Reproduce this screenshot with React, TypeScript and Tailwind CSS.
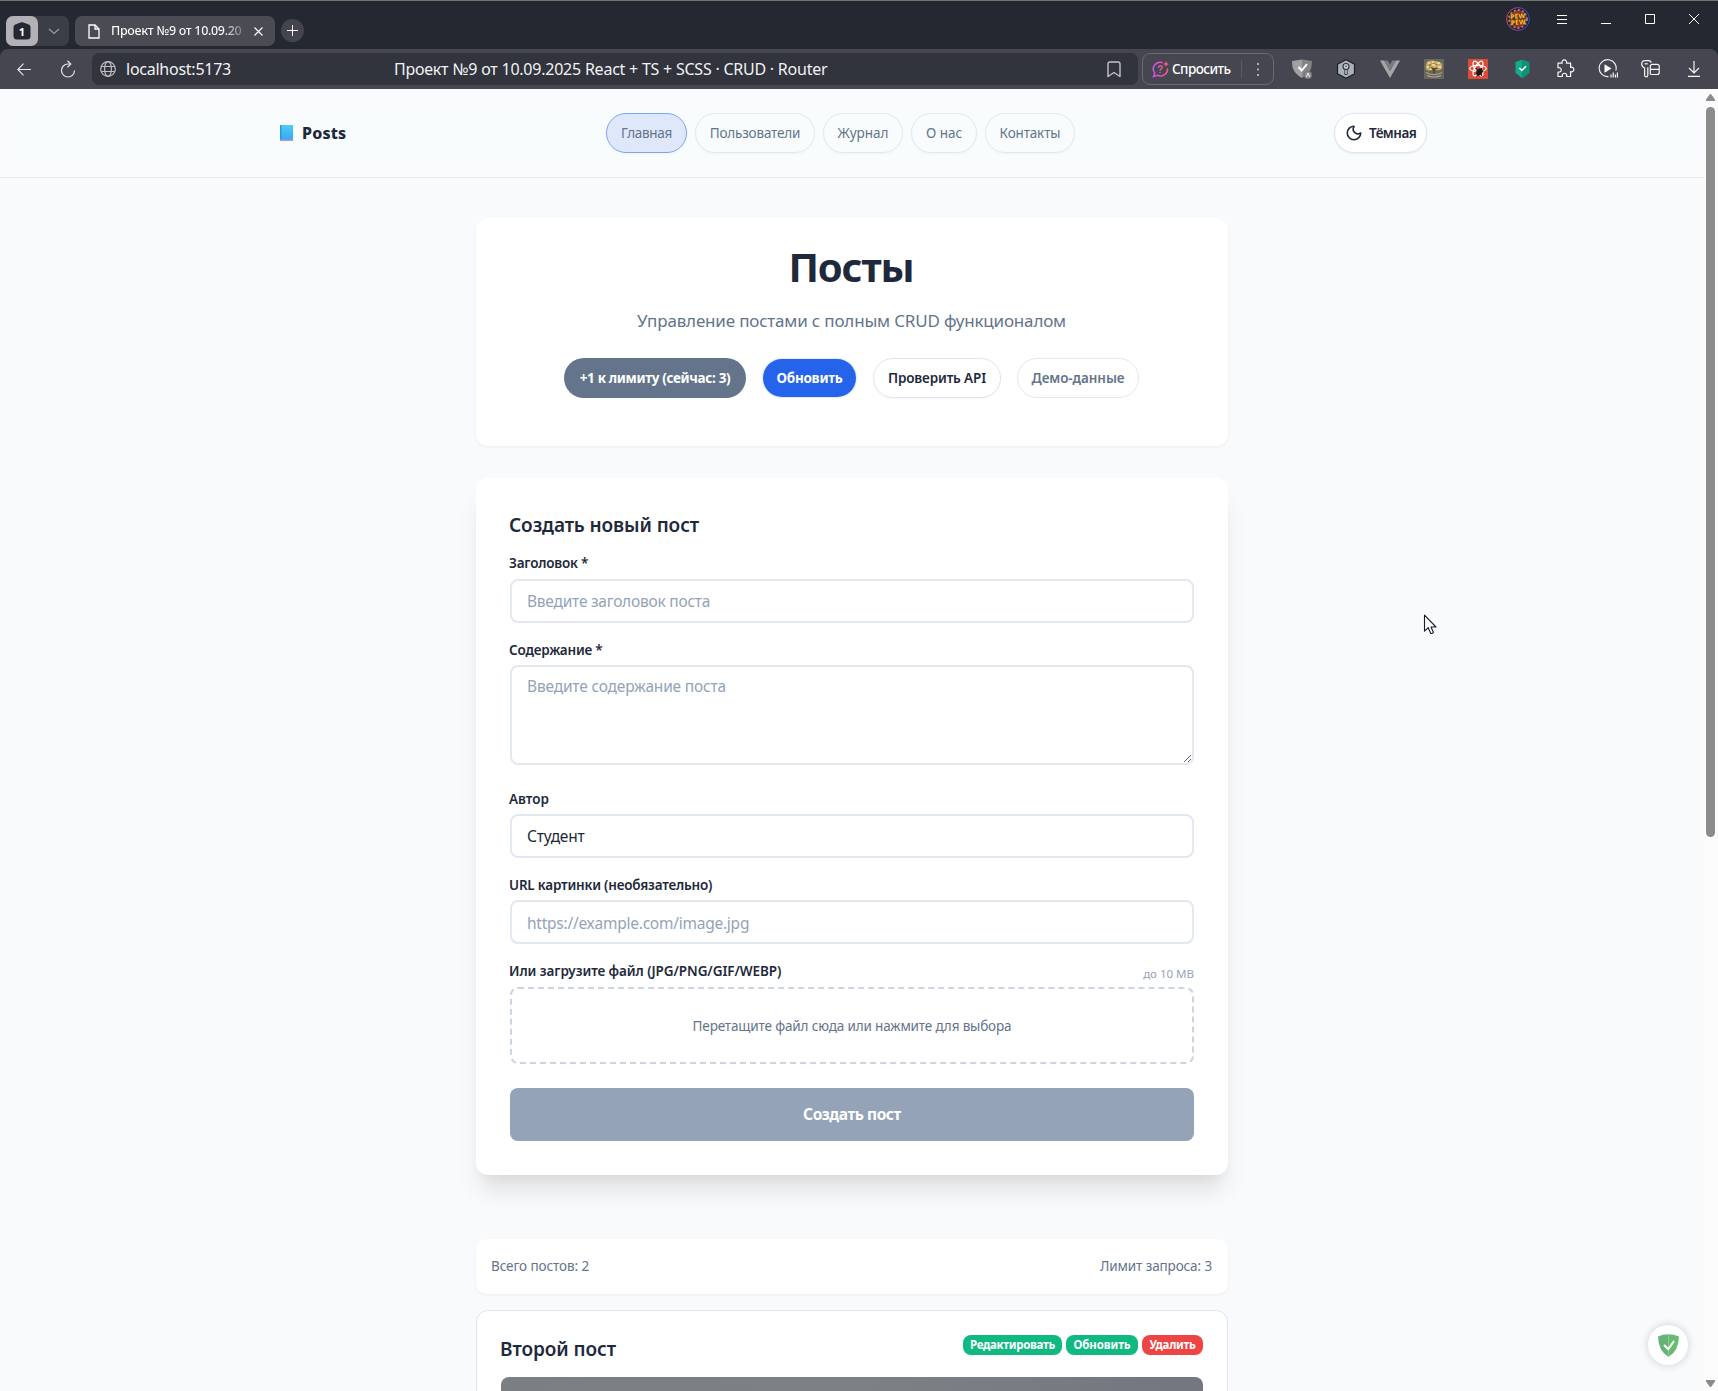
import type { ReactNode } from "react";
import { Moon } from "lucide-react";

function TabStrip() {
  return (
    <div className="flex h-[49px] items-start border-t border-[#74776f] bg-[#242830] text-white">
      <div className="mt-[15px] ml-1.5 flex h-[30px] w-[63px] rounded-[7px] bg-[#3b3e47]">
        <div className="flex h-[30px] w-8 items-center justify-center rounded-[7px] bg-[#b2b2b6]">
          <div className="relative flex h-[18px] w-[18px] items-center justify-center">
            <svg className="absolute inset-0" width="18" height="18" viewBox="0 0 18 18">
              <path d="M2.3 2.5 7.6.5q1.4-.5 2.8 0l5.3 2Q17.5 3.200 17.500 5v9q0 3.500-3.500 3.500H4Q.5 17.500.5 14V5Q.5 3.200 2.300 2.500Z" fill="#242830" />
            </svg>
            <span className="relative text-[11px] leading-none font-bold">1</span>
          </div>
        </div>
        <div className="flex flex-1 items-center justify-center">
          <svg width="12" height="7" viewBox="0 0 12 7" fill="none" stroke="#9a9ba1" strokeWidth="1.2"><path d="m1 1 5 4.500L11 1" /></svg>
        </div>
      </div>
      <div className="mt-[15px] ml-1.5 flex h-[30px] w-[200px] items-center rounded-[7px] bg-[#4b4b54]">
        <svg className="ml-[13px] shrink-0" width="12" height="15" viewBox="0 0 12 15" fill="none" stroke="#fff" strokeWidth="1.300">
          <path d="M1 1h6l4 4v9H1Z" /><path d="M7 1v4h4" />
        </svg>
        <span className="ml-[11px] w-[139px] bg-linear-to-r from-white from-80% to-transparent bg-clip-text text-[12.5px] font-medium tracking-[-0.32px] whitespace-nowrap text-transparent">
          Проект №9 от 10.09.20
        </span>
        <svg className="ml-1 shrink-0" width="9" height="9" viewBox="0 0 9 9" stroke="#fff" strokeWidth="1.100"><path d="m.5.5 8 8m0-8-8 8" /></svg>
      </div>
      <div className="mt-[18px] ml-1.5 flex h-[23px] w-[23px] items-center justify-center rounded-full bg-[#43444d]">
        <svg width="11" height="11" viewBox="0 0 11 11" stroke="#fff" strokeWidth="1"><path d="M5.500 0v11M0 5.500h11" /></svg>
      </div>
      <div className="mt-1 ml-auto flex pr-0.5">
        <WindowButton>
          <svg width="24" height="24" viewBox="0 0 24 24">
            <defs>
              <linearGradient id="ring" x1="0" x2="1"><stop stopColor="#e0436b" /><stop offset="1" stopColor="#4a3fd0" /></linearGradient>
            </defs>
            <circle cx="12" cy="12" r="11.400" fill="#22202f" stroke="url(#ring)" />
            <circle cx="12" cy="12" r="9" fill="#a8281f" />
            <circle cx="12" cy="12" r="9" fill="none" stroke="#6a9a90" strokeWidth="1.800" strokeDasharray="2 2.200" />
            <path d="M4.500 7.500 19 5.500l.5 6-1 5L6 18l-1-5Z" fill="#5c2416" />
            <g fill="#e3b52b" fontFamily="Noto Sans" fontWeight="900" fontSize="6.800" textAnchor="middle">
              <text x="12" y="11.500" transform="rotate(-5 12 12)">PEW</text>
              <text x="12" y="17.500" transform="rotate(-5 12 12)">PEW</text>
            </g>
          </svg>
        </WindowButton>
        <WindowButton><svg width="10" height="9" viewBox="0 0 10 9" stroke="#fff"><path d="M0 .5h10M0 4.500h10M0 8.500h10" /></svg></WindowButton>
        <WindowButton><svg width="10" height="10" viewBox="0 0 10 10" stroke="#fff"><path d="M0 9.500h10" /></svg></WindowButton>
        <WindowButton><svg width="10" height="10" viewBox="0 0 10 10" fill="none" stroke="#fff"><path d="M.5.5h9v9h-9Z" /></svg></WindowButton>
        <WindowButton><svg width="10" height="10" viewBox="0 0 10 10" stroke="#fff"><path d="m0 0 10 10M10 0 0 10" /></svg></WindowButton>
      </div>
    </div>
  );
}

function WindowButton({ children }: { children: ReactNode }) {
  return <div className="flex h-7 w-11 items-center justify-center">{children}</div>;
}

function Slot({ children }: { children: ReactNode }) {
  return <div className="flex h-10 w-11 shrink-0 items-center justify-center">{children}</div>;
}

function Toolbar() {
  return (
    <div className="bg-[#242830]">
      <div className="flex h-10 items-center rounded-t-[8px] bg-[#464650] text-[#f2f2f3]">
        <div className="flex w-[92px] items-center pl-[17px]">
          <svg width="14" height="13" viewBox="0 0 14 13" fill="none" stroke="#e9e9ea" strokeWidth="1.100"><path d="M14 6.500H.8M6.500.7.8 6.500l5.700 5.800" /></svg>
          <svg className="ml-[29px]" width="16" height="18" viewBox="0 0 16 18" fill="none" stroke="#e3e3e5" strokeWidth="1.200">
            <path d="M10.500 4H7.800A6.500 6.500 0 1 0 14.500 10.500" /><path d="m7.500.8 3.300 3.200-3.300 3.200" />
          </svg>
        </div>
        <div className="flex h-8 w-[1046px] items-center rounded-[7px] bg-[#31333d] text-[16px]">
          <svg className="ml-2" width="16" height="16" viewBox="0 0 16 16" fill="none" stroke="#bdbdc2" strokeWidth="1.200">
            <circle cx="8" cy="8" r="7.300" /><ellipse cx="8" cy="8" rx="3.400" ry="7.300" /><path d="M1.500 5.500h13M1.500 10.500h13" />
          </svg>
          <span className="ml-2.5 w-[268px] tracking-[-0.25px]">localhost:5173</span>
          <span className="tracking-[-0.23px]">Проект №9 от 10.09.2025 React + TS + SCSS · CRUD · Router</span>
          <svg className="mr-[17px] ml-auto" width="14" height="17" viewBox="0 0 14 17" fill="none" stroke="#c3c3c7" strokeWidth="1.400" strokeLinejoin="round">
            <path d="M1 15.500V3q0-2 2-2h8q2 0 2 2v12.500l-6-4Z" />
          </svg>
        </div>
        <div className="ml-1 flex h-8 w-[132px] items-center rounded-[8px] border border-[#6a6a73]">
          <svg className="ml-[9px]" width="17" height="17" viewBox="0 0 17 17" fill="none" strokeLinecap="round">
            <defs><linearGradient id="ask" x1="0" x2="1"><stop stopColor="#d152e0" /><stop offset="1" stopColor="#f4568c" /></linearGradient></defs>
            <path d="M10 1.500A7 6.600 0 0 0 2.800 12L1.500 15.500 5.500 14.300A7 6.600 0 0 0 15.500 8" stroke="url(#ask)" strokeWidth="1.500" />
            <path d="M6.500 6.300c.3-2.200 4-1.900 3.700.2-.2 1.300-1.900 1.200-2 2.700M8 11.500v.1" stroke="url(#ask)" strokeWidth="1.400" />
            <path d="M14 0q.3 2.700 3 3-2.700.3-3 3-.3-2.700-3-3 2.700-.3 3-3Z" fill="#f4568c" />
          </svg>
          <span className="ml-[3px] w-[69px] text-[13.5px] font-medium tracking-[-0.55px] text-white">Спросить</span>
          <div className="h-[18px] w-px bg-[#5b5b65]" />
          <svg className="ml-[15px]" width="2" height="13" viewBox="0 0 2 13" fill="#a9a9ae"><path d="M0 0h2v2H0zM0 5.500h2v2H0zM0 11h2v2H0z" /></svg>
        </div>
        <div className="ml-1.5 flex">
          <Slot>
            <svg width="20" height="20" viewBox="0 0 20 20">
              <path d="M0 2 10 .5V19Q2 14.500.5 8Z" fill="#a1a1a2" /><path d="M20 2 10 .5V19q8-4.500 9.500-11Z" fill="#858586" />
              <path d="m6.500 8 3.200 3.500L15 5.200" fill="none" stroke="#fff" strokeWidth="1.900" />
              <circle cx="16" cy="16" r="3.800" fill="#8f8f91" stroke="#747477" /><path d="m14.300 18 1.700-4 1.700 4" fill="none" stroke="#eee" />
            </svg>
          </Slot>
          <Slot>
            <svg width="20" height="20" viewBox="0 0 20 20">
              <path d="m10 .8 8.500 4.500v9.400L10 19.200l-8.500-4.500V5.300Z" fill="#a8b0ba" stroke="#1d2025" strokeWidth="1.200" strokeLinejoin="round" />
              <circle cx="10" cy="7.500" r="3" fill="#c9ced5" stroke="#30343a" strokeWidth="1.100" /><circle cx="10" cy="7.200" r=".8" fill="#30343a" />
              <path d="M8.800 10.500h2.400V15.500H8.800Z" fill="#c9ced5" stroke="#30343a" strokeWidth=".9" />
            </svg>
          </Slot>
          <Slot>
            <svg width="20" height="18" viewBox="0 0 20 18"><path d="M0 .5h4L10 11 16 .5h4L10 18Z" fill="#a6a6a9" /><path d="M4 .5h3.700L10 4.500 12.300.5H16L10 11Z" fill="#7c7c80" /></svg>
          </Slot>
          <Slot>
            <svg width="20" height="20" viewBox="0 0 20 20">
              <path d="M0 0h20v20H0Z" fill="#69675a" />
              <path d="M2 5.500Q2.500 1.500 8 1.500T17.500 4q2 4-.5 6.500-3 1.500-5 .5h-4q-4 1.500-6-.5-1-2.500 0-5Z" fill="#c4a965" />
              <path d="M4 4h2M8 3h2m3 1h3M3 8h2m3-2h3m3 2h3M6 10h2m3-2h1" stroke="#efe2b4" strokeWidth="1.400" />
              <path d="M5 6h2m5-.5h1M9 4.500h1M5.500 8.500h1m6 1h2" stroke="#7b6234" strokeWidth="1" />
              <path d="M10 9v6M7.500 8.500l2.500 3 2.500-3" fill="none" stroke="#574225" strokeWidth="1.300" />
              <path d="M2 13.500q3 2 8 2t8-2M3 16.500q3 1.500 7 1.500t7-1.500" fill="none" stroke="#aaa58e" strokeWidth="1.100" />
            </svg>
          </Slot>
          <Slot>
            <svg width="20" height="20" viewBox="0 0 20 20">
              <path d="M0 0h20v20H0Z" fill="#dc4a38" />
              <g fill="none" stroke="#fff" strokeWidth="1.200"><ellipse cx="10" cy="9.500" rx="8.300" ry="3.200" /><ellipse cx="10" cy="9.500" rx="8.300" ry="3.200" transform="rotate(60 10 9.500)" /><ellipse cx="10" cy="9.500" rx="8.300" ry="3.200" transform="rotate(120 10 9.500)" /></g>
              <ellipse cx="11.500" cy="13" rx="2.800" ry="4" fill="#1b1b1b" transform="rotate(35 11.500 13)" />
              <path d="m8 9 6 8M7.500 13l8-1M9 17l5-8" stroke="#1b1b1b" strokeWidth="1.100" />
            </svg>
          </Slot>
          <Slot>
            <svg width="15" height="20" viewBox="0 0 15 20">
              <path d="M7.500.5.5 3v11L7.500 19.500Z" fill="#14aa8c" /><path d="m7.500.5 7 2.500v11l-7 5.500Z" fill="#0e9279" />
              <path d="m4.300 9 2.500 2.500 4.200-4.300" fill="none" stroke="#fff" strokeWidth="1.500" />
            </svg>
          </Slot>
          <Slot>
            <svg width="20" height="20" viewBox="0 0 20 20" fill="none" stroke="#f5f5f5" strokeWidth="1.200" strokeLinejoin="round">
              <path d="M2 4.200H6.200A2.300 2.300 0 1 1 10.400 4.200H14.600V8.400A2.300 2.300 0 1 1 14.600 12.600V17.500H10.600A2.300 2.300 0 1 0 6.400 17.500H2V13A2.300 2.300 0 1 0 2 8.800Z" />
            </svg>
          </Slot>
          <div className="flex w-10 items-center justify-center">
            <svg width="20" height="20" viewBox="0 0 20 20" fill="none" stroke="#f5f5f5" strokeWidth="1.100">
              <path d="M10.500 17.600a8.500 8.500 0 1 1 7.300-6" /><path d="M6.500 5.200 13.500 9.500l-7 4.300Z" fill="#fff" stroke="none" />
              <path d="M13 18.500v-3M15.200 18.500v-5M17.400 18.500v-3M19.400 18.500v-5" strokeWidth="1.200" />
            </svg>
          </div>
          <Slot>
            <svg width="19" height="18" viewBox="0 0 19 18" fill="none" stroke="#f5f5f5" strokeWidth="1.200" strokeLinejoin="round">
              <path d="M6.800 7.200V15.200Q6.800 16.800 5.200 16.800T3.600 15.200V8Q.7 7 .7 4T4 .7H7.500Q10 .7 10 2.800" />
              <path d="M3.600 3.800H6.800" />
              <path d="M9.300 14.200V6.300Q9.300 4.300 11.200 4.300H16.200Q18.200 4.300 18.200 6.300V12.500Q18.200 14.500 16.200 14.500H9.500M9.300 9.300H18" />
            </svg>
          </Slot>
          <Slot><svg width="12" height="16" viewBox="0 0 12 16" fill="none" stroke="#f5f5f5" strokeWidth="1.200"><path d="M6 0v12M1 7l5 5 5-5M0 15.300h12" /></svg></Slot>
        </div>
      </div>
    </div>
  );
}

function NavPill({ className, children }: { className: string; children: ReactNode }) {
  return <a className={`flex h-10 items-center justify-center rounded-full border shadow-[0_1px_2px_rgba(100,116,139,0.06)] ${className}`}>{children}</a>;
}

function SiteHeader() {
  return (
    <header className="flex h-[89px] border-b border-[#e7eaef] bg-[#f8fcfd] pl-[278px] shadow-[inset_0_0_12px_8px_#fafafd]">
      <div className="flex w-[1149px] items-center justify-between text-[13.5px] text-[#64748b]">
        <div className="flex w-[69px] items-center text-[16px] font-extrabold text-[#1e293b]">
          <svg className="ml-0.5" width="13" height="16" viewBox="0 0 13 16">
            <defs><linearGradient id="book" x2="0" y2="1"><stop stopColor="#4fcdf5" /><stop offset="1" stopColor="#36a4f3" /></linearGradient></defs>
            <path d="M0 0h13v16H0Z" fill="url(#book)" /><path d="M0 0h1.500v16H0Z" fill="#3196d2" /><path d="M0 14.500h13V16H0Z" fill="#a899e6" />
          </svg>
          <span className="ml-[9px] tracking-[0.15px]">Posts</span>
        </div>
        <nav className="flex gap-2">
          <NavPill className="w-[81px] border-[#80a4f5] bg-[#dfe8fb] tracking-[-0.3px]">Главная</NavPill>
          <NavPill className="w-[120px] border-[#e2e8f0] tracking-[-0.18px]">Пользователи</NavPill>
          <NavPill className="w-20 border-[#e2e8f0]">Журнал</NavPill>
          <NavPill className="w-[66px] border-[#e2e8f0]">О нас</NavPill>
          <NavPill className="w-[90px] border-[#e2e8f0] tracking-[-0.15px]">Контакты</NavPill>
        </nav>
        <button className="flex h-10 w-[93px] items-center rounded-full border border-[#dce5f1] bg-white pl-[10px] font-semibold tracking-[-0.5px] text-[#1e293b] shadow-[0_1px_2px_rgba(100,116,139,0.1)]">
          <Moon size={18} strokeWidth={2.1} />
          <span className="ml-1.5">Тёмная</span>
        </button>
      </div>
    </header>
  );
}

function Hero() {
  return (
    <section className="flex h-[228px] flex-col items-center rounded-xl bg-white pt-6 pr-px shadow-[0_1px_3px_rgba(0,0,0,0.06)]">
      <h1 className="pr-px text-[40px] leading-[49px] font-bold tracking-[-1.1px] text-[#1e293b]">Посты</h1>
      <p className="mt-4 text-[17px] leading-7 tracking-[-0.18px] text-[#64748b]">Управление постами с полным CRUD функционалом</p>
      <div className="mt-[23px] flex items-center gap-4 text-[13.5px]">
        <button className="h-10 w-[182px] rounded-full bg-[#64748b] pt-px font-bold tracking-[-0.35px] text-white">+1 к лимиту (сейчас: 3)</button>
        <button className="ml-px h-[38px] w-[93px] rounded-full bg-[#2563eb] pt-px font-bold tracking-[-0.27px] text-white shadow-[0_0_1px_1px_rgba(37,99,235,0.15)]">Обновить</button>
        <button className="ml-px h-10 w-32 rounded-full border border-[#dce5f1] pt-px font-semibold tracking-[-0.15px] text-[#1e293b] shadow-[0_1px_2px_rgba(0,0,0,0.04)]">Проверить API</button>
        <button className="h-10 w-[122px] rounded-full border border-[#e2e8f0] pt-px font-semibold tracking-[-0.07px] text-[#64748b]">Демо-данные</button>
      </div>
    </section>
  );
}

const field = "block w-full rounded-lg border-2 border-[#e2e8f0] bg-white px-[15px] text-[15.5px] text-[#1e293b] placeholder:text-[#94a3b8]";

function Label({ className, children }: { className: string; children: ReactNode }) {
  return <label className={`-ml-px block text-[13.5px] leading-5 font-semibold text-[#1e293b] ${className}`}>{children}</label>;
}

function PostForm() {
  return (
    <section className="mt-8 h-[697px] rounded-xl bg-white px-[34px] pt-[33px] shadow-[0_20px_25px_-5px_rgba(0,0,0,0.1),0_10px_10px_-5px_rgba(0,0,0,0.04)]">
      <h2 className="-ml-px text-[19px] leading-7 font-semibold tracking-[-0.1px] text-[#1e293b]">Создать новый пост</h2>
      <Label className="mt-3.5 tracking-[-0.22px]">Заголовок *</Label>
      <input className={`${field} mt-1.5 h-11 tracking-[-0.23px]`} placeholder="Введите заголовок поста" />
      <Label className="mt-[17px] tracking-[-0.2px]">Содержание *</Label>
      <textarea className={`${field} mt-[5px] h-[100px] resize-y py-[7px] leading-6 tracking-[-0.18px]`} placeholder="Введите содержание поста" />
      <Label className="mt-6">Автор</Label>
      <input className={`${field} mt-[5px] h-11 tracking-[-0.2px]`} defaultValue="Студент" />
      <Label className="mt-[17px] tracking-[-0.2px]">URL картинки (необязательно)</Label>
      <input className={`${field} mt-[5px] h-11 pt-0.5 tracking-[-0.25px]`} placeholder="https://example.com/image.jpg" />
      <div className="mt-[17px] flex h-5 items-center justify-between">
        <Label className="tracking-[-0.08px]">Или загрузите файл (JPG/PNG/GIF/WEBP)</Label>
        <span className="pt-1.5 text-[11.5px] text-[#94a3b8]">до 10 MB</span>
      </div>
      <div className="mt-1.5 flex h-[77px] items-center justify-center rounded-lg border-2 border-dashed border-[#cbd5e1] pt-0.5 text-[13.5px] tracking-[-0.15px] text-[#64748b]">
        Перетащите файл сюда или нажмите для выбора
      </div>
      <button className="mt-6 h-[53px] w-full rounded-lg bg-[#94a3b8] text-[15.5px] font-bold tracking-[-0.45px] text-white">Создать пост</button>
    </section>
  );
}

function PostCard() {
  return (
    <article className="mt-4 h-[200px] rounded-xl border border-[#dde6f1] bg-white px-6 pt-[24px]">
      <div className="flex items-start justify-between">
        <h3 className="-ml-px text-[19px] leading-7 font-semibold tracking-[-0.07px] text-[#1e293b]">Второй пост</h3>
        <div className="flex gap-1 text-[11.5px] font-bold text-white">
          <button className="h-5 w-[99px] rounded-[8px] bg-[#10b981] tracking-[-0.33px]">Редактировать</button>
          <button className="h-5 w-[72px] rounded-[8px] bg-[#10b981] tracking-[-0.12px]">Обновить</button>
          <button className="h-5 w-[61px] rounded-[8px] bg-[#ef4444] tracking-[-0.28px]">Удалить</button>
        </div>
      </div>
      <div className="mt-[14px] h-[120px] rounded-lg bg-linear-to-r from-[#7b7e82] via-[#7d8185] to-[#727780]" />
    </article>
  );
}

function Scrollbar() {
  return (
    <div className="flex h-full w-3.5 flex-col items-center bg-[#fcfcfc] pr-px pt-[5px]">
      <svg className="shrink-0" width="9" height="7" viewBox="0 0 9 7" fill="#8b8b8b"><path d="M4.500 0Q5 0 5.400.6L9 5.500V7H0V5.500L3.600.6Q4 0 4.500 0Z" /></svg>
      <div className="mt-1.5 h-[730px] w-[9px] shrink-0 rounded-full bg-[#8b8b8b]" />
      <svg className="mt-auto mb-1 shrink-0" width="9" height="7" viewBox="0 0 9 7" fill="#8b8b8b"><path d="M4.500 7Q5 7 5.400 6.400L9 1.500V0H0V1.500L3.600 6.400Q4 7 4.500 7Z" /></svg>
    </div>
  );
}

export default function App() {
  return (
    <div className="relative flex h-[1391px] w-[1718px] flex-col overflow-hidden bg-[#f9fafc] font-['Noto_Sans',sans-serif]">
      <TabStrip />
      <Toolbar />
      <div className="flex h-[1302px]">
        <div className="w-[1704px] overflow-hidden">
          <SiteHeader />
          <main className="mt-10 ml-[476px] w-[752px]">
            <Hero />
            <PostForm />
            <div className="mt-16 flex h-[55px] items-center justify-between rounded-[10px] bg-white px-4 text-[13.5px] text-[#64748b] shadow-[0_1px_3px_rgba(0,0,0,0.06)]">
              <span className="-ml-px tracking-[-0.1px]">Всего постов: 2</span>
              <span className="tracking-[-0.12px]">Лимит запроса: 3</span>
            </div>
            <PostCard />
          </main>
        </div>
        <Scrollbar />
      </div>
      <div className="absolute right-[30px] bottom-[26px] flex h-10 w-10 items-center justify-center rounded-full bg-white shadow-[0_0_8px_rgba(0,0,0,0.18)]">
        <svg width="21" height="23" viewBox="0 0 21 23">
          <path d="M0 2.500Q5 .3 10.500.3V23Q.3 17 0 2.500Z" fill="#67b279" /><path d="M21 2.500Q16 .3 10.500.3V23Q20.700 17 21 2.500Z" fill="#68bc71" />
          <path d="m6 11 4.200 4.300L16 7" fill="none" stroke="#fff" strokeWidth="2" />
        </svg>
      </div>
      <svg className="absolute top-[614px] left-[1423px]" width="14" height="22" viewBox="0 0 14 22">
        <path d="M1.500 1.200v16l3.700-3.500 2.600 5.800q1.800.3 2.600-1.200L8 13h5Z" fill="#fff" stroke="#1a1a2a" strokeWidth="1.100" strokeLinejoin="round" />
      </svg>
    </div>
  );
}
